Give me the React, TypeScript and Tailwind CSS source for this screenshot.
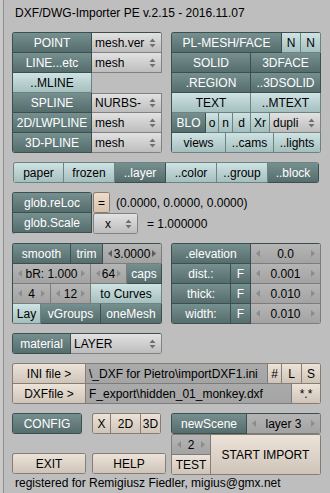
import React from 'react';

// button looks, roughly after the old Blender 2.4x theme
const V = {
  dark: 'bg-linear-to-b from-[#768f8f] to-[#566d6d] text-white border-[#3d4e4e]',
  light: 'bg-linear-to-b from-[#cfe3e3] to-[#a5bfbf] text-black border-[#6d8282]',
  menu: 'bg-linear-to-b from-[#e2e2e2] to-[#bdbdbd] text-black border-[#828282]',
  num: 'bg-linear-to-b from-[#b5b5b5] to-[#a3a3a3] text-black border-[#7c7c7c]',
  beige: 'bg-linear-to-b from-[#ece3d9] to-[#cfc4b8] text-black border-[#877d73]',
  pink: 'bg-linear-to-b from-[#efdccb] to-[#d8c2b0] text-black border-[#877d73]',
  field: 'bg-linear-to-b from-[#aaaaaa] to-[#a4a4a4] text-black border-[#7c7c7c]',
};
type Var = keyof typeof V;

const UpDown = () => (
  <svg width="7" height="10" viewBox="0 0 7 10" className="shrink-0">
    <path d="M3.5 0.5 L6.5 4 H0.5 Z M0.5 6 H6.5 L3.5 9.5 Z" fill="#707070" />
  </svg>
);

const ArrL = ({ c }: { c: string }) => (
  <svg width="4" height="7" viewBox="0 0 4 7" className="shrink-0">
    <path d="M4 0 V7 L0 3.5 Z" fill={c} />
  </svg>
);

const ArrR = ({ c }: { c: string }) => (
  <svg width="4" height="7" viewBox="0 0 4 7" className="shrink-0">
    <path d="M0 0 V7 L4 3.5 Z" fill={c} />
  </svg>
);

function Btn({
  w,
  v = 'dark',
  h = 'h-[20px]',
  justify = 'justify-center',
  className = '',
  children,
}: {
  w: string;
  v?: Var;
  h?: string;
  justify?: string;
  className?: string;
  children?: React.ReactNode;
}) {
  return (
    <div
      className={`box-border ${h} ${w} shrink-0 border-r border-b flex items-center ${justify} whitespace-nowrap overflow-hidden leading-none ${V[v]} ${className}`}
    >
      {children}
    </div>
  );
}

function Menu({ w, label, className = 'pl-[3px]' }: { w: string; label: string; className?: string }) {
  return (
    <Btn w={w} v="menu" justify="justify-between" className={`pr-[5px] ${className}`}>
      <span>{label}</span>
      <UpDown />
    </Btn>
  );
}

function Num({ w, label, dark }: { w: string; label: string; dark?: boolean }) {
  const c = dark ? '#5c5c5c' : '#8c8c8c';
  return (
    <Btn w={w} v="num" justify="justify-between" className="px-[5px]">
      <ArrL c={c} />
      <span>{label}</span>
      <ArrR c={c} />
    </Btn>
  );
}

function Group({
  children,
  b = 'border-[#3d4e4e]',
  className = '',
}: {
  children: React.ReactNode;
  b?: string;
  className?: string;
}) {
  return (
    <div className={`flex flex-col shrink-0 border-t border-l rounded-[3px] overflow-hidden ${b} ${className}`}>
      {children}
    </div>
  );
}

const Row = ({ children }: { children: React.ReactNode }) => <div className="flex">{children}</div>;

export default function App() {
  return (
    <div className="w-[330px] h-[493px] bg-[#c9c9c9] font-['Liberation_Sans',Arial,sans-serif] text-[12px] text-black overflow-hidden">
      <div className="ml-[3px] h-full border-l border-[#8f8f8f] bg-[#bebebe] pl-[8px]">
        <div className="h-[32px] pt-[6px] pl-[3px] leading-[14px] whitespace-nowrap">
          DXF/DWG-Importer PE v.2.15 - 2016.11.07
        </div>

        {/* entity types */}
        <div className="flex gap-[9px]">
          <Group>
            <Row>
              <Btn w="w-[79px]">POINT</Btn>
              <Menu w="w-[70px]" label="mesh.ver" />
            </Row>
            <Row>
              <Btn w="w-[79px]">LINE...etc</Btn>
              <Menu w="w-[70px]" label="mesh" />
            </Row>
            <Row>
              <Btn w="w-[79px]" v="light">..MLINE</Btn>
              <div className="w-[70px]" />
            </Row>
            <Row>
              <Btn w="w-[79px]">SPLINE</Btn>
              <Menu w="w-[70px]" label="NURBS-" className="pl-[3px] border-t" />
            </Row>
            <Row>
              <Btn w="w-[79px]">2D/LWPLINE</Btn>
              <Menu w="w-[70px]" label="mesh" />
            </Row>
            <Row>
              <Btn w="w-[79px]">3D-PLINE</Btn>
              <Menu w="w-[70px]" label="mesh" />
            </Row>
          </Group>

          <Group>
            <Row>
              <Btn w="w-[110px]">PL-MESH/FACE</Btn>
              <Btn w="w-[19px]" v="light">N</Btn>
              <Btn w="w-[20px]" v="light">N</Btn>
            </Row>
            <Row>
              <Btn w="w-[79px]">SOLID</Btn>
              <Btn w="w-[70px]">3DFACE</Btn>
            </Row>
            <Row>
              <Btn w="w-[79px]">.REGION</Btn>
              <Btn w="w-[70px]">..3DSOLID</Btn>
            </Row>
            <Row>
              <Btn w="w-[79px]" v="light">TEXT</Btn>
              <Btn w="w-[70px]" v="light">..MTEXT</Btn>
            </Row>
            <Row>
              <Btn w="w-[34px]">BLO</Btn>
              <Btn w="w-[13px]" v="light">o</Btn>
              <Btn w="w-[14px]" v="light">n</Btn>
              <Btn w="w-[18px]" v="light">d</Btn>
              <Btn w="w-[19px]" v="light">Xr</Btn>
              <Menu w="w-[51px]" label="dupli" />
            </Row>
            <Row>
              <Btn w="w-[54px]" v="light">views</Btn>
              <Btn w="w-[48px]" v="light">..cams</Btn>
              <Btn w="w-[47px]" v="light">..lights</Btn>
            </Row>
          </Group>
        </div>

        {/* filters */}
        <div className="mt-[9px] pl-[1px] flex">
          <Group b="border-[#6d8282]">
            <Row>
              <Btn w="w-[50px]" v="light">paper</Btn>
              <Btn w="w-[51px]" v="light">frozen</Btn>
              <Btn w="w-[51px]">..layer</Btn>
              <Btn w="w-[51px]" v="light">..color</Btn>
              <Btn w="w-[51px]" v="light">..group</Btn>
              <Btn w="w-[51px]">..block</Btn>
            </Row>
          </Group>
        </div>

        {/* global location / scale */}
        <div className="mt-[9px] flex">
          <Group>
            <Row>
              <Btn w="w-[79px]">glob.reLoc</Btn>
            </Row>
            <Row>
              <Btn w="w-[79px]">glob.Scale</Btn>
            </Row>
          </Group>
          <div className="ml-[1px] flex flex-col">
            <div className="flex items-center">
              <Group b="border-[#877d73]">
                <Btn w="w-[16px]" v="pink">=</Btn>
              </Group>
              <span className="ml-[6px] leading-none whitespace-nowrap">(0.0000, 0.0000, 0.0000)</span>
            </div>
            <div className="flex items-center">
              <Group b="border-[#828282]">
                <Menu w="w-[44px]" label="x" className="pl-[11px]" />
              </Group>
              <span className="ml-[9px] leading-none whitespace-nowrap">= 1.000000</span>
            </div>
          </div>
        </div>

        {/* options */}
        <div className="mt-[9px] flex gap-[9px]">
          <Group>
            <Row>
              <Btn w="w-[58px]">smooth</Btn>
              <Btn w="w-[32px]">trim</Btn>
              <Num w="w-[59px]" label="3.0000" dark />
            </Row>
            <Row>
              <Num w="w-[78px]" label="bR: 1.000" />
              <Num w="w-[36px]" label="64" />
              <Btn w="w-[35px]">caps</Btn>
            </Row>
            <Row>
              <Num w="w-[38px]" label="4" />
              <Num w="w-[40px]" label="12" />
              <Btn w="w-[71px]" v="light">to Curves</Btn>
            </Row>
            <Row>
              <Btn w="w-[28px]" v="light">Lay</Btn>
              <Btn w="w-[60px]">vGroups</Btn>
              <Btn w="w-[61px]">oneMesh</Btn>
            </Row>
          </Group>

          <Group>
            <Row>
              <Btn w="w-[79px]">.elevation</Btn>
              <Num w="w-[70px]" label="0.0" />
            </Row>
            <Row>
              <Btn w="w-[59px]">dist.:</Btn>
              <Btn w="w-[20px]">F</Btn>
              <Num w="w-[70px]" label="0.001" />
            </Row>
            <Row>
              <Btn w="w-[59px]">thick:</Btn>
              <Btn w="w-[20px]">F</Btn>
              <Num w="w-[70px]" label="0.010" />
            </Row>
            <Row>
              <Btn w="w-[59px]">width:</Btn>
              <Btn w="w-[20px]">F</Btn>
              <Num w="w-[70px]" label="0.010" />
            </Row>
          </Group>
        </div>

        <div className="mt-[9px] flex">
          <Group>
            <Row>
              <Btn w="w-[58px]">material</Btn>
              <Menu w="w-[91px]" label="LAYER" />
            </Row>
          </Group>
        </div>

        {/* files */}
        <div className="mt-[9px] flex">
          <Group b="border-[#877d73]">
            <Row>
              <Btn w="w-[73px]" v="beige">INI file &gt;</Btn>
              <Btn w="w-[182px]" v="field" justify="justify-start" className="pl-[3px]">
                {'\\_DXF for Pietro\\importDXF1.ini'}
              </Btn>
              <Btn w="w-[14px]" v="beige">#</Btn>
              <Btn w="w-[20px]" v="beige">L</Btn>
              <Btn w="w-[19px]" v="beige">S</Btn>
            </Row>
            <Row>
              <Btn w="w-[73px]" v="beige">DXFfile &gt;</Btn>
              <Btn w="w-[206px]" v="field" justify="justify-start" className="pl-[3px]">
                {'F_export\\hidden_01_monkey.dxf'}
              </Btn>
              <Btn w="w-[29px]" v="beige">*.*</Btn>
            </Row>
          </Group>
        </div>

        {/* bottom controls */}
        <div className="mt-[9px] flex">
          <div className="w-[159px] flex flex-col">
            <div className="flex">
              <Group>
                <Btn w="w-[69px]">CONFIG</Btn>
              </Group>
              <Group b="border-[#877d73]" className="ml-[10px]">
                <Row>
                  <Btn w="w-[18px]" v="beige">X</Btn>
                  <Btn w="w-[30px]" v="beige">2D</Btn>
                  <Btn w="w-[20px]" v="beige">3D</Btn>
                </Row>
              </Group>
            </div>
            <div className="mt-[19px] flex">
              <Group b="border-[#877d73]">
                <Btn w="w-[73px]" v="beige">EXIT</Btn>
              </Group>
              <Group b="border-[#877d73]" className="ml-[6px]">
                <Btn w="w-[73px]" v="beige">HELP</Btn>
              </Group>
            </div>
          </div>

          <div className="flex flex-col">
            <Group>
              <Row>
                <Btn w="w-[75px]">newScene</Btn>
                <Num w="w-[74px]" label="layer 3" />
              </Row>
            </Group>
            <Group b="border-[#877d73]">
              <Row>
                <div className="flex flex-col">
                  <Num w="w-[39px]" label="2" />
                  <Btn w="w-[39px]" v="beige">TEST</Btn>
                </div>
                <Btn w="w-[110px]" h="h-[40px]" v="beige">START IMPORT</Btn>
              </Row>
            </Group>
          </div>
        </div>

        <div className="mt-[1px] pl-[3px] leading-[14px] whitespace-nowrap">
          registered for Remigiusz Fiedler, migius@gmx.net
        </div>
      </div>
    </div>
  );
}
